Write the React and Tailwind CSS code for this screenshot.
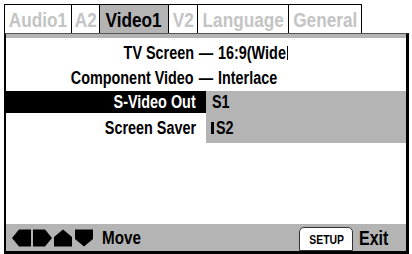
const tabs = [
  { label: "Audio1", w: "w-[67px]" },
  { label: "A2", w: "w-[28px]" },
  { label: "Video1", w: "w-[69px]", active: true },
  { label: "V2", w: "w-[29px]" },
  { label: "Language", w: "w-[91px]" },
  { label: "General", w: "w-[74px]" },
];

// condensed text: no narrow face is installed, so squeeze Liberation Sans
function N({ children, o = "origin-left", s = "scale-x-[0.8]" }) {
  return <span className={`inline-block whitespace-nowrap ${s} ${o}`}>{children}</span>;
}

function Arrows() {
  return (
    <svg width="84" height="20" viewBox="0 0 84 20" className="block">
      <polygon points="0,10 7,1.5 19,1.5 19,18.5 7,18.5" fill="#000" />
      <polygon points="21,1.5 33,1.5 40,10 33,18.5 21,18.5" fill="#000" />
      <polygon points="42,9 51,1.5 60,9 60,18.5 42,18.5" fill="#000" />
      <polygon points="63,1.5 81,1.5 81,11 72,18.5 63,11" fill="#000" />
    </svg>
  );
}

export default function App() {
  return (
    <div className="w-[412px] h-[254px] bg-white overflow-hidden font-['Liberation_Sans',Arial,sans-serif] font-bold text-black">
      <div className="flex pt-[4px] pl-[4px] h-[33px]">
        {tabs.map((t, i) => (
          <div
            key={t.label}
            className={`${t.w} h-[29px] border-t border-l border-black flex items-center justify-center text-[20px] leading-none pt-[2px] ${
              i === tabs.length - 1 ? "border-r" : ""
            } ${t.active ? "bg-[#b4b4b4] text-black" : "bg-white text-[#c4c4c4]"}`}
          >
            <N o="origin-center" s="scale-x-[0.86]">{t.label}</N>
          </div>
        ))}
      </div>

      <div className="ml-[4px] w-[405px] border-t border-l-2 border-r-[3px] border-b-[3px] border-black border-t-[#555]">
        <div className="h-[4px] bg-[#b4b4b4]" />
        <div className="h-[186px] pt-[3px] text-[18px] leading-none">
          <div className="h-[24px] flex items-center">
            <div className="w-[188px] text-right">
              <N o="origin-right">TV Screen</N>
            </div>
            <div className="w-[24px] text-center">
              <N o="origin-center">—</N>
            </div>
            <div className="flex items-center">
              <N>16:9(Wide</N>
              <span className="inline-block w-[1px] h-[14px] bg-black -ml-[16px]" />
            </div>
          </div>
          <div className="h-[26px] flex items-center">
            <div className="w-[188px] text-right">
              <N o="origin-right">Component Video</N>
            </div>
            <div className="w-[24px] text-center">
              <N o="origin-center">—</N>
            </div>
            <N>Interlace</N>
          </div>
          <div className="h-[22px] flex">
            <div className="w-[200px] bg-black text-white flex items-center justify-end pr-[10px]">
              <N o="origin-right">S-Video Out</N>
            </div>
            <div className="flex-1 bg-[#b4b4b4] flex items-center pl-[6px]">
              <N>S1</N>
            </div>
          </div>
          <div className="h-[30px] flex">
            <div className="w-[200px] flex items-center justify-end pr-[10px]">
              <N o="origin-right">Screen Saver</N>
            </div>
            <div className="flex-1 bg-[#b4b4b4] flex items-center pl-[5px] gap-[2px]">
              <span className="inline-block w-[3px] h-[12px] bg-black" />
              <N>S2</N>
            </div>
          </div>
        </div>
        <div className="h-[27px] bg-[#b4b4b4] flex items-center pl-[6px]">
          <Arrows />
          <span className="ml-[6px] text-[19px] leading-none">
            <N>Move</N>
          </span>
          <div className="ml-auto h-[24px] self-end w-[54px] bg-white border border-[#333] rounded-t-[5px] flex items-center justify-center text-[13px] leading-none">
            <N o="origin-center">SETUP</N>
          </div>
          <span className="ml-[6px] mr-[10px] text-[20px] leading-none">
            <N>Exit</N>
          </span>
        </div>
      </div>
    </div>
  );
}
